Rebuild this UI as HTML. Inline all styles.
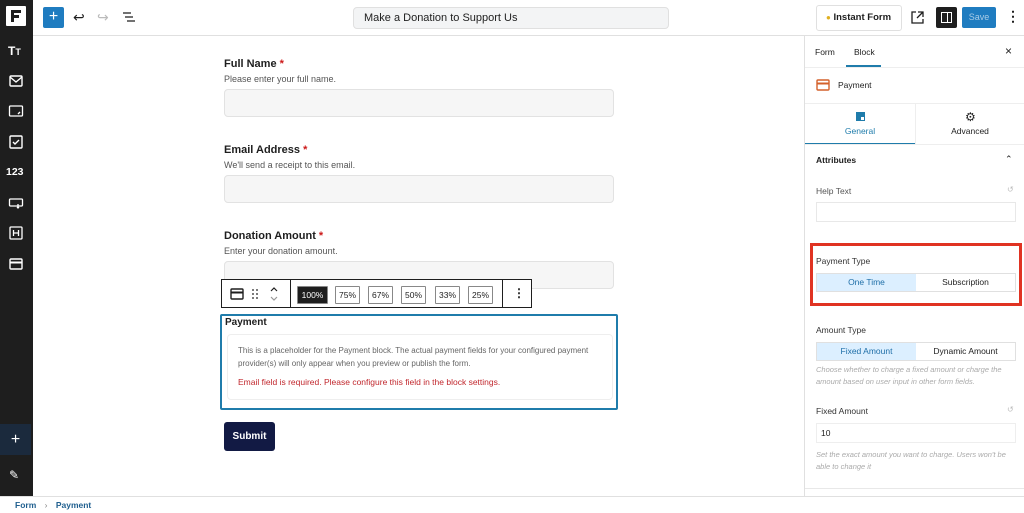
<!DOCTYPE html><html><head><style>
*{box-sizing:border-box;margin:0;padding:0}
body{width:1024px;height:513px;overflow:hidden;background:#fff;font-family:"Liberation Sans",sans-serif;color:#1e1e1e;position:relative;font-size:11px}
.abs{position:absolute}
.side{left:0;top:0;width:33px;height:496px;background:#1e1e1e}
.ic{position:absolute;left:8px;width:16px;height:16px;color:#fff}
.top{left:33px;top:0;width:991px;height:36px;border-bottom:1px solid #e0e0e0;background:#fff}
.lbl{font-size:11px;font-weight:bold;color:#1e1e1e}
.req{color:#cc1818}
.help{font-size:9px;color:#555}
.inp{position:absolute;left:224px;width:390px;height:28px;background:#f6f6f6;border:1px solid #e2e2e2;border-radius:4px}
.panel{left:804px;top:36px;width:220px;height:460px;border-left:1px solid #e0e0e0;background:#fff}
.seg{position:absolute;left:11px;width:200px;height:19px;border:1px solid #e0e0e0;display:flex;font-size:8.5px}
.seg div{flex:1;text-align:center;line-height:17px}
.seg .on{background:#dcefff;color:#1f6fa8}
.pl{font-size:8.5px;color:#333}
.it{font-size:7.5px;font-style:italic;color:#aaa;line-height:12px}
.pct{position:absolute;top:6px;height:18px;border:1px solid #888;font-size:8.5px;line-height:16px;text-align:center;border-radius:1px}
</style></head><body>
<div class="abs side">
 <div class="abs" style="left:6px;top:6px;width:20px;height:20px;background:#fff;border-radius:1px"><div style="position:absolute;left:5px;top:4px;width:10px;height:3px;background:#1e1e1e"></div><div style="position:absolute;left:5px;top:4px;width:3px;height:12px;background:#1e1e1e"></div><div style="position:absolute;left:5px;top:9px;width:8px;height:3px;background:#1e1e1e"></div></div>
 <div class="ic" style="top:44px;font-weight:bold;font-size:12px">T<span style="font-size:9px">T</span></div>
 <svg class="ic" style="top:73px" viewBox="0 0 16 16" fill="none" stroke="#fff" stroke-width="1.4"><rect x="2" y="3" width="12" height="10" rx="1"/><path d="M2 4l6 5 6-5"/></svg>
 <svg class="ic" style="top:103px" viewBox="0 0 16 16" fill="none" stroke="#fff" stroke-width="1.3"><rect x="1.5" y="3" width="13" height="10" rx="1"/><path d="M10 11l2-2"/></svg>
 <svg class="ic" style="top:134px" viewBox="0 0 16 16" fill="none" stroke="#fff" stroke-width="1.4"><rect x="2" y="2" width="12" height="12" rx="1"/><path d="M5 8l2 2 4-4"/></svg>
 <div class="ic" style="top:166px;left:6px;font-size:10.5px;font-weight:bold">123</div>
 <svg class="ic" style="top:195px" viewBox="0 0 16 16" fill="none" stroke="#fff" stroke-width="1.3"><rect x="1.5" y="4" width="13" height="7" rx="1"/><path d="M10 9v4M9 12l1 1 1-1"/></svg>
 <svg class="ic" style="top:225px" viewBox="0 0 16 16" fill="none" stroke="#fff" stroke-width="1.3"><rect x="2" y="2" width="12" height="12" rx="1"/><path d="M5.5 5v6M10.5 5v6M5.5 8h5"/></svg>
 <svg class="ic" style="top:256px" viewBox="0 0 16 16" fill="none" stroke="#fff" stroke-width="1.4"><rect x="2" y="3" width="12" height="10" rx="1"/><path d="M2 6.5h12" stroke-width="2"/></svg>
 <div class="abs" style="left:0;top:424px;width:31px;height:31px;background:#1b2a3d;color:#fff;font-size:16px;text-align:center;line-height:31px">+</div>
 <div class="abs" style="left:9px;top:468px;color:#fff;font-size:12px">✎</div>
</div>
<div class="abs top">
 <div class="abs" style="left:10px;top:7px;width:21px;height:21px;background:#1f7cc0;color:#fff;text-align:center;line-height:20px;font-size:16px;border-radius:2px">+</div>
 <div class="abs" style="left:40px;top:9px;font-size:14px">↩</div>
 <div class="abs" style="left:64px;top:9px;font-size:14px;color:#bbb">↪</div>
 <svg class="abs" style="left:89px;top:11px" width="14" height="12" viewBox="0 0 14 12" stroke="#1e1e1e" stroke-width="1.3"><path d="M1 2h8M3 6h8M5 10h8"/></svg>
 <div class="abs" style="left:320px;top:7px;width:316px;height:22px;background:#f3f4f5;border:1px solid #e0e0e0;border-radius:4px;font-size:11px;line-height:20px;padding-left:10px">Make a Donation to Support Us</div>
 <div class="abs" style="left:783px;top:5px;width:86px;height:26px;border:1px solid #e0e0e0;border-radius:3px;font-size:9.5px;font-weight:bold;line-height:24px;padding-left:9px;white-space:nowrap"><span style="color:#e0b020;font-size:8px">●</span> Instant Form</div>
 <svg class="abs" style="left:878px;top:11px" width="13" height="13" viewBox="0 0 13 13" fill="none" stroke="#1e1e1e" stroke-width="1.3"><path d="M5 1H1v11h11V8M7 1h5v5M12 1L6 7"/></svg>
 <div class="abs" style="left:903px;top:7px;width:21px;height:21px;background:#1e1e1e;border-radius:2px"><div style="position:absolute;left:5px;top:5px;width:11px;height:11px;border:1.3px solid #fff"></div><div style="position:absolute;left:11px;top:5px;width:1.3px;height:11px;background:#fff"></div></div>
 <div class="abs" style="left:929px;top:7px;width:34px;height:21px;background:#1f7cc0;color:#a8cbe6;font-size:9px;text-align:center;line-height:21px;border-radius:2px">Save</div>
 <div class="abs" style="left:973px;top:8px;font-size:14px;font-weight:bold">⋮</div>
</div>
<div class="abs lbl" style="left:224px;top:58px">Full Name <span class="req">*</span></div>
<div class="abs help" style="left:224px;top:74px">Please enter your full name.</div>
<div class="inp" style="top:89px"></div>
<div class="abs lbl" style="left:224px;top:144px">Email Address <span class="req">*</span></div>
<div class="abs help" style="left:224px;top:160px">We'll send a receipt to this email.</div>
<div class="inp" style="top:175px"></div>
<div class="abs lbl" style="left:224px;top:230px">Donation Amount <span class="req">*</span></div>
<div class="abs help" style="left:224px;top:246px">Enter your donation amount.</div>
<div class="inp" style="top:261px"></div>
<div class="abs" style="left:221px;top:279px;width:311px;height:29px;background:#fff;border:1px solid #1e1e1e">
 <svg class="abs" style="left:8px;top:8px" width="14" height="12" viewBox="0 0 14 12" fill="none" stroke="#1e1e1e" stroke-width="1.4"><rect x="1" y="1" width="12" height="10" rx="1"/><path d="M1 4.5h12" stroke-width="2"/></svg>
 <svg class="abs" style="left:30px;top:9px" width="6" height="10" viewBox="0 0 6 10" fill="#1e1e1e"><circle cx="1" cy="1" r="0.9"/><circle cx="5" cy="1" r="0.9"/><circle cx="1" cy="5" r="0.9"/><circle cx="5" cy="5" r="0.9"/><circle cx="1" cy="9" r="0.9"/><circle cx="5" cy="9" r="0.9"/></svg>
 <svg class="abs" style="left:47px;top:5px" width="10" height="18" viewBox="0 0 10 18" fill="none" stroke-width="1.2"><path d="M2 6l3-3 3 3" stroke="#1e1e1e"/><path d="M2 12l3 3 3-3" stroke="#999"/></svg>
 <div class="abs" style="left:68px;top:0;width:1px;height:27px;background:#1e1e1e"></div>
 <div class="pct" style="left:75px;width:31px;background:#1e1e1e;color:#fff">100%</div>
 <div class="pct" style="left:113px;width:25px">75%</div>
 <div class="pct" style="left:146px;width:25px">67%</div>
 <div class="pct" style="left:179px;width:25px">50%</div>
 <div class="pct" style="left:213px;width:25px">33%</div>
 <div class="pct" style="left:246px;width:25px">25%</div>
 <div class="abs" style="left:280px;top:0;width:1px;height:27px;background:#1e1e1e"></div>
 <div class="abs" style="left:291px;top:6px;font-size:12px;font-weight:bold">⋮</div>
</div>
<div class="abs" style="left:220px;top:314px;width:398px;height:96px;border:2px solid #1f7cab;border-radius:2px">
 <div class="abs" style="left:3px;top:1px;font-size:10px;font-weight:bold">Payment</div>
 <div class="abs" style="left:5px;top:18px;width:386px;height:66px;border:1px solid #eee;border-radius:4px;padding:10px 10px">
  <div style="font-size:8px;color:#666;line-height:12.5px">This is a placeholder for the Payment block. The actual payment fields for your configured payment provider(s) will only appear when you preview or publish the form.</div>
  <div style="font-size:8.5px;color:#c1272d;margin-top:7px">Email field is required. Please configure this field in the block settings.</div>
 </div>
</div>
<div class="abs" style="left:224px;top:422px;width:51px;height:29px;background:#121a44;color:#fff;font-size:10px;font-weight:bold;text-align:center;line-height:29px;border-radius:3px">Submit</div>
<div class="abs panel">
 <div class="abs" style="left:10px;top:11px;font-size:8.5px">Form</div>
 <div class="abs" style="left:49px;top:11px;font-size:8.5px">Block</div>
 <div class="abs" style="left:41px;top:29px;width:35px;height:2px;background:#1f7cab"></div>
 <div class="abs" style="left:200px;top:8px;font-size:12px">×</div>
 <div class="abs" style="left:0;top:31px;width:220px;height:1px;background:#eee"></div>
 <svg class="abs" style="left:11px;top:43px" width="14" height="12" viewBox="0 0 14 12" fill="none" stroke="#d4612b" stroke-width="1.4"><rect x="1" y="1" width="12" height="10" rx="1"/><path d="M1 4.5h12" stroke-width="2"/></svg>
 <div class="abs" style="left:33px;top:44px;font-size:8.5px">Payment</div>
 <div class="abs" style="left:0;top:67px;width:220px;height:1px;background:#eee"></div>
 <div class="abs" style="left:110px;top:67px;width:1px;height:41px;background:#eee"></div>
 <div class="abs" style="left:51px;top:76px;width:9px;height:9px;background:#1f7cab"><div style="position:absolute;right:1px;bottom:1px;width:3px;height:3px;background:#fff"></div></div>
 <div class="abs" style="left:0;top:90px;width:110px;text-align:center;font-size:8.5px;color:#1f7cab">General</div>
 <div class="abs" style="left:160px;top:74px;font-size:12px">⚙</div>
 <div class="abs" style="left:110px;top:90px;width:110px;text-align:center;font-size:8.5px">Advanced</div>
 <div class="abs" style="left:0;top:107px;width:110px;height:2px;background:#1f7cab"></div>
 <div class="abs" style="left:0;top:108px;width:220px;height:1px;background:#eee"></div>
 <div class="abs" style="left:11px;top:119px;font-size:8.5px;font-weight:bold">Attributes</div>
 <div class="abs" style="left:200px;top:118px;font-size:9px">⌃</div>
 <div class="abs pl" style="left:11px;top:150px;color:#555">Help Text</div>
 <div class="abs" style="left:202px;top:149px;font-size:8px;color:#bbb">↺</div>
 <div class="abs" style="left:11px;top:166px;width:200px;height:20px;border:1px solid #e8e8e8"></div>
 <div class="abs" style="left:5px;top:207px;width:212px;height:63px;border:3px solid #e03322"></div>
 <div class="abs pl" style="left:11px;top:220px">Payment Type</div>
 <div class="seg" style="top:237px"><div class="on">One Time</div><div>Subscription</div></div>
 <div class="abs pl" style="left:11px;top:289px">Amount Type</div>
 <div class="seg" style="top:306px"><div class="on">Fixed Amount</div><div>Dynamic Amount</div></div>
 <div class="abs it" style="left:11px;top:328px;width:205px">Choose whether to charge a fixed amount or charge the amount based on user input in other form fields.</div>
 <div class="abs pl" style="left:11px;top:370px">Fixed Amount</div>
 <div class="abs" style="left:202px;top:369px;font-size:8px;color:#bbb">↺</div>
 <div class="abs" style="left:11px;top:387px;width:200px;height:20px;border:1px solid #eee;font-size:8.5px;line-height:18px;padding-left:4px">10</div>
 <div class="abs it" style="left:11px;top:413px;width:205px">Set the exact amount you want to charge. Users won't be able to change it</div>
 <div class="abs" style="left:0;top:452px;width:220px;height:1px;background:#e8e8e8"></div>
</div>
<div class="abs" style="left:0;top:496px;width:1024px;height:17px;border-top:1px solid #e0e0e0;background:#fff;font-size:8.5px;font-weight:bold;color:#1f5f8f;line-height:16px;padding-left:15px">Form <span style="color:#888;margin:0 6px;font-weight:normal">›</span> Payment</div>
</body></html>
